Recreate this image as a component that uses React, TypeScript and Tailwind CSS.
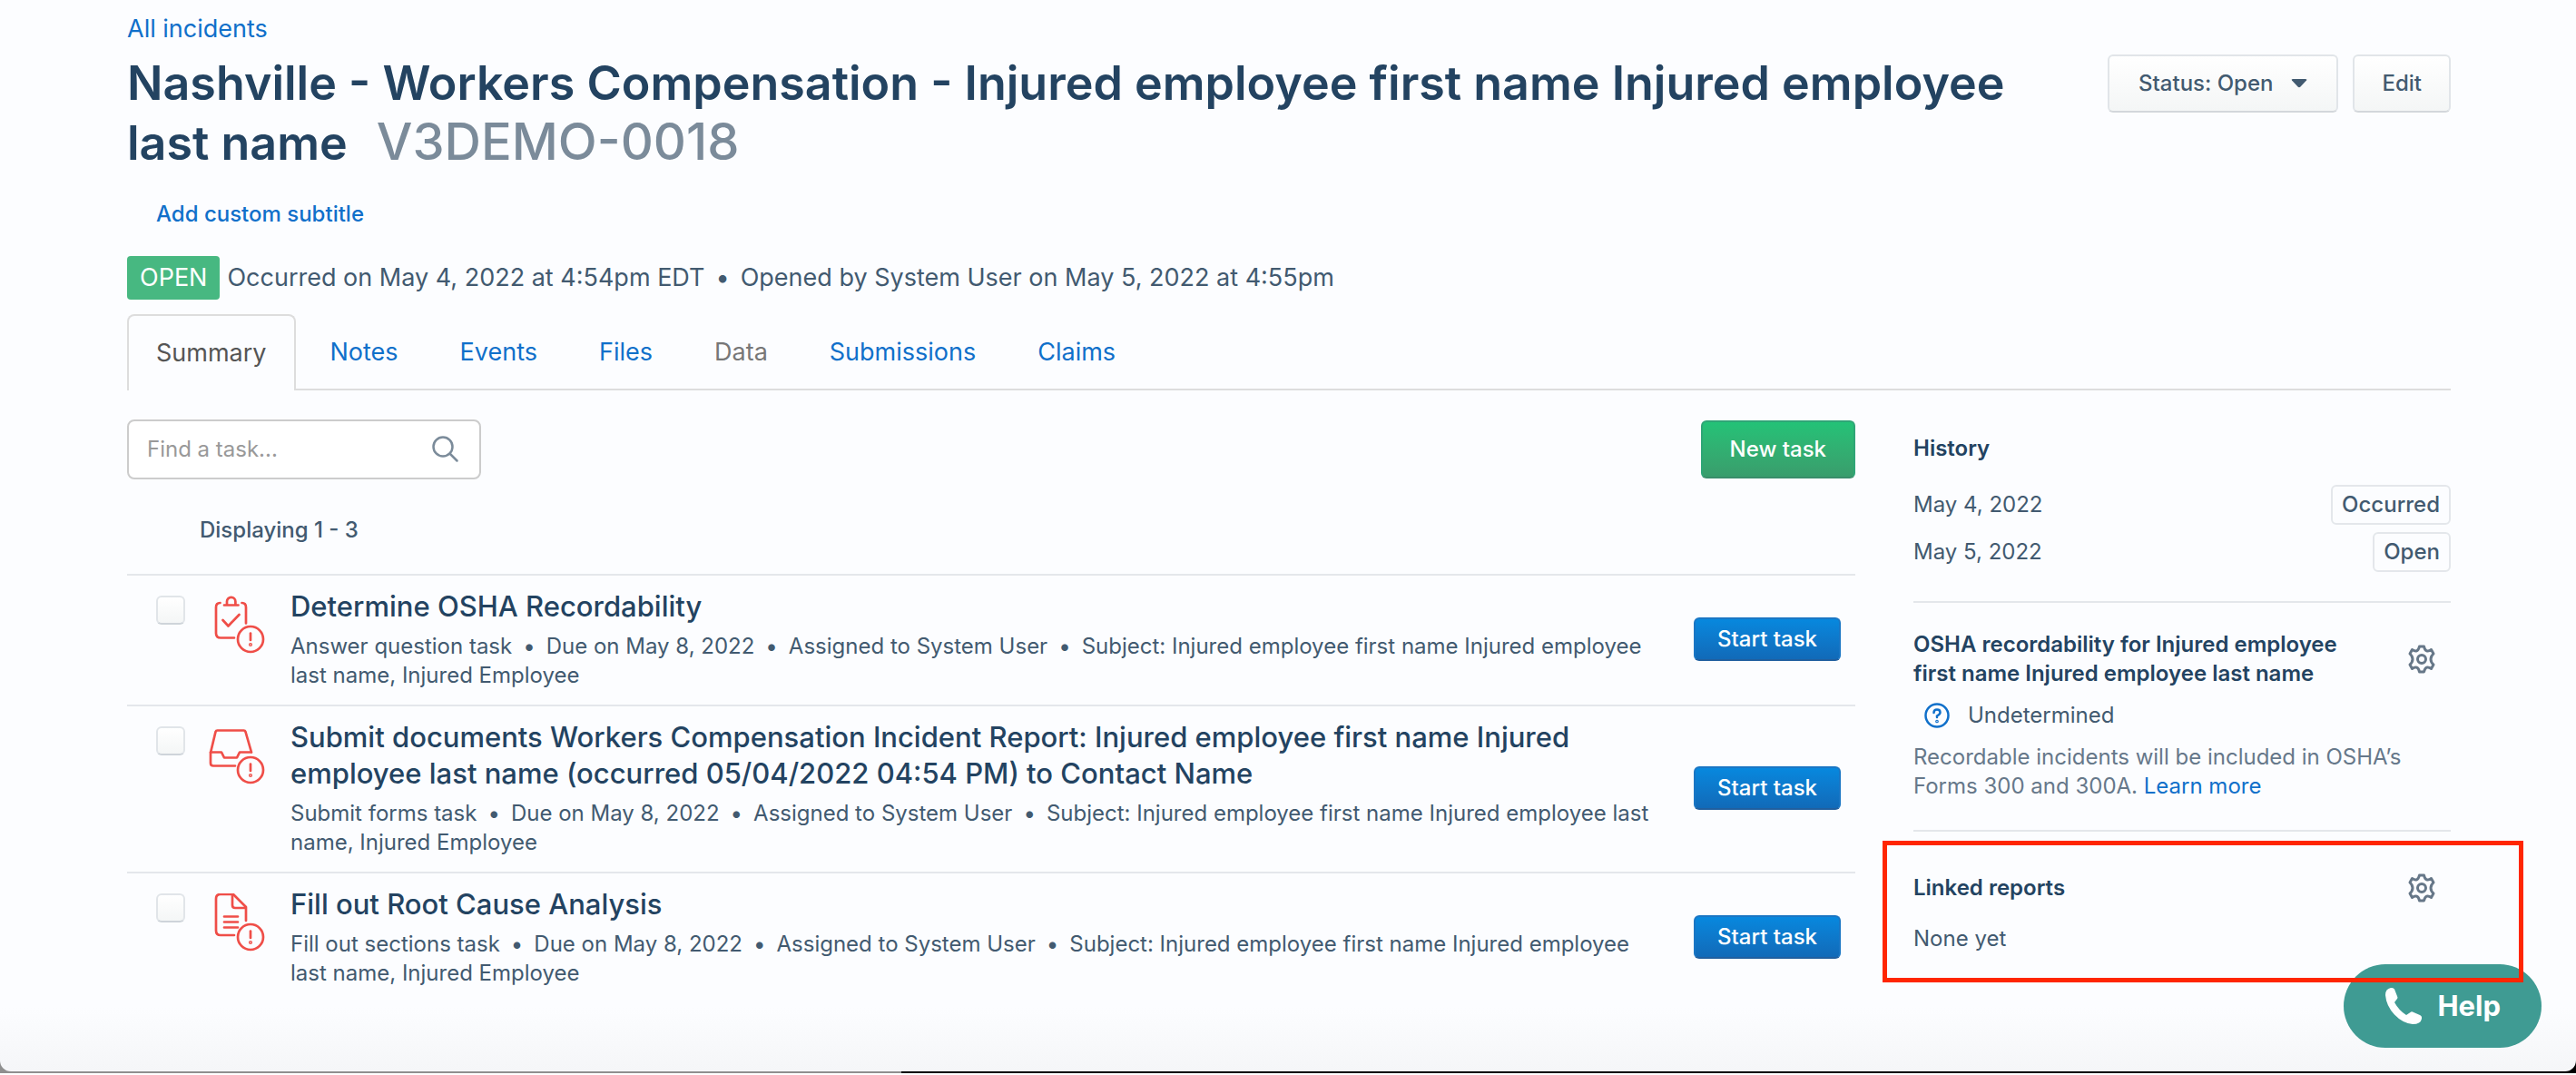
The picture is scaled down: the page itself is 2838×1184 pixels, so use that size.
import React from "react";

const Dot = () => <span className="px-3">•</span>;

function Gear({ label }: { label: string }) {
  return (
    <button aria-label={label} className="mr-4 shrink-0 text-[#667788]">
      <svg width="32" height="32" viewBox="0 0 32 32" fill="none" stroke="currentColor" strokeWidth="3" strokeLinejoin="round">
        <path d="M13.500 2h5q.8 4 3 4.800t5-1.300l2.500 4.500q-3 2.700-3 6t3 6L26.500 26.500q-3-2-5-1.300t-3 4.800h-5q-.8-4-3-4.800t-5 1.300L3 22q3-2.700 3-6t-3-6l2.500-4.500q3 2 5 1.300t3-4.800z" />
        <circle cx="16" cy="16" r="4.500" />
      </svg>
    </button>
  );
}

function Alert() {
  return (
    <>
      <circle cx="46" cy="48" r="14" />
      <path d="M46 41.500v7.500" />
      <circle cx="46" cy="54" r="0.700" />
    </>
  );
}

function TaskIcon({ kind }: { kind: string }) {
  return (
    <svg width="64" height="64" viewBox="0 0 64 64" fill="none" stroke="#ef4e48" strokeWidth="2.700" strokeLinecap="round" strokeLinejoin="round" aria-hidden="true">
      {kind === "check" && (
        <>
          <path d="M12.500 8q-4.500 0-4.500 5v28.500q0 5 5 5h15M36.500 8q4.500 0 4.500 5v17.500" />
          <path d="M17 10.500h15.500M20 10v-3.500a4.700 4.700 0 0 1 9.400 0V10" />
          <path d="M15.500 27l6 6.500 12-12.500" />
        </>
      )}
      {kind === "tray" && (
        <>
          <path d="M29 43.500H5q-3 0-3-3V29l5.500-23q.5-1.500 2-1.500h29q1.500 0 2 1.500l6.500 22.500" />
          <path d="M2 28.500h12l3 6h14l3-6h12.500" />
        </>
      )}
      {kind === "doc" && (
        <>
          <path d="M28 46H13q-5 0-5-5V6q0-5 5-5h14l14 14v15" />
          <path d="M26 1.500V13q0 3 3 3h11.500M17 25.500h15M17 31.500h15M17 37.500h15" />
        </>
      )}
      <Alert />
    </svg>
  );
}

const tasks = [
  { kind: "check", title: "Determine OSHA Recordability", type: "Answer question task" },
  {
    kind: "tray",
    title:
      "Submit documents Workers Compensation Incident Report: Injured employee first name Injured employee last name (occurred 05/04/2022 04:54 PM) to Contact Name",
    type: "Submit forms task",
  },
  { kind: "doc", title: "Fill out Root Cause Analysis", type: "Fill out sections task" },
];

const tabs = ["Notes", "Events", "Files", "Data", "Submissions", "Claims"];

const greyButton =
  "h-16 rounded-md border-2 border-[#e1e5e9] border-b-[#d3d7db] bg-linear-to-b from-white to-[#f4f6f6] text-[24px] font-medium text-[#425a70]";

export default function App() {
  return (
    <div className="bg-linear-to-r from-[#8f8f8f] from-35% to-black to-35% pb-[2px] font-['Inter',sans-serif] text-[24px] leading-8 text-[#425a70]">
      <div className="rounded-b-xl bg-[#fcfdff] bg-linear-to-b from-transparent from-94% to-[#f5f6f8] pt-3 pr-[138px] pl-[140px]">
        <header>
          <a href="#incidents" className="block text-[27px] leading-10 text-[#1070ca]">
            All incidents
          </a>
          <div className="mt-2 flex items-start justify-between">
            <h1 className="max-w-[2120px] text-[52px] leading-16 font-semibold text-[#234361]">
              Nashville - Workers Compensation - Injured employee first name Injured employee last name
              <span className="pl-8 text-[56px] font-medium text-[#7b8b9a]">V3DEMO-0018</span>
            </h1>
            <div className="flex shrink-0 gap-4">
              <button className={greyButton + " flex items-center gap-5 px-8"}>
                Status: Open
                <svg width="18" height="12" viewBox="0 0 18 12" fill="#425a70" aria-hidden="true">
                  <path d="M2 1h14q2 0 1 1.500l-6.500 7q-1.500 1.500-3 0L1 2.500Q0 1 2 1z" />
                </svg>
              </button>
              <button className={greyButton + " px-[30px]"}>Edit</button>
            </div>
          </div>
          <button className="mt-[30px] ml-8 block font-medium text-[#1070ca]">Add custom subtitle</button>
          <div className="mt-[30px] flex items-center text-[27px]">
            <span className="mr-2 flex h-12 items-center rounded-sm bg-[#47b881] px-[14px] text-white">OPEN</span>
            Occurred on May 4, 2022 at 4:54pm EDT
            <Dot />
            Opened by System User on May 5, 2022 at 4:55pm
          </div>
        </header>

        <nav className="mt-4 flex h-[84px] items-stretch border-b-2 border-[#dddddd] text-[27px] text-[#1070ca]">
          <a href="#summary" className="mr-1 -mb-[2px] flex items-center rounded-t-lg border-2 border-b-0 border-[#dddddd] bg-[#fcfdff] px-[30px] text-[#555]">
            Summary
          </a>
          {tabs.map((tab) => (
            <a key={tab} href={"#" + tab.toLowerCase()} className={"flex items-center px-[34px] pt-[2px] " + (tab === "Data" ? "text-[#777]" : "")}>
              {tab}
            </a>
          ))}
        </nav>

        <div className="flex gap-16">
          <main className="min-w-0 flex-1 pt-8">
            <div className="flex items-center justify-between">
              <label className="flex h-[66px] w-[390px] items-center rounded-lg border-2 border-[#cccccc] bg-white px-5">
                <input type="text" aria-label="Find a task" placeholder="Find a task..." className="min-w-0 flex-1 outline-none placeholder:text-[#999]" />
                <svg width="32" height="32" viewBox="0 0 32 32" fill="none" stroke="#7b8b9a" strokeWidth="2.500" strokeLinecap="round" aria-hidden="true">
                  <circle cx="12" cy="13" r="10.500" />
                  <path d="M20 21l7.500 7.500" />
                </svg>
              </label>
              <button className="h-16 rounded-md border-2 border-[#2fa576] border-b-[#3a8e6a] bg-linear-to-b from-[#23c277] to-[#399d6c] px-[30px] font-medium text-white">
                New task
              </button>
            </div>
            <p className="mt-10 mb-8 pl-20 font-medium">Displaying 1 - 3</p>
            {tasks.map((t) => (
              <article key={t.kind} className="flex border-t-2 border-[#e4e7eb] pt-[14px] pb-4">
                <input
                  type="checkbox"
                  aria-label={t.title}
                  className="mt-2 ml-8 size-8 shrink-0 appearance-none rounded-md border-2 border-[#e1e5e9] border-b-[#ced4da] bg-linear-to-b from-white to-[#f4f6f6]"
                />
                <div className="mx-[26px] mt-2 shrink-0">
                  <TaskIcon kind={t.kind} />
                </div>
                <div className="min-w-0 flex-1">
                  <h2 className="text-[31px] leading-10 font-medium text-[#234361]">{t.title}</h2>
                  <p className="mt-2">
                    {t.type}
                    <Dot />
                    Due on May 8, 2022
                    <Dot />
                    Assigned to System User
                    <Dot />
                    Subject: Injured employee first name Injured employee last name, Injured Employee
                  </p>
                </div>
                <button className="mr-4 ml-11 h-12 shrink-0 self-center rounded-md border-2 border-[#1a76c4] border-b-[#205f9f] bg-linear-to-b from-[#0788de] to-[#116ab8] px-6 font-medium text-white">
                  Start task
                </button>
              </article>
            ))}
          </main>

          <aside className="w-[592px] shrink-0">
            <section className="border-b-2 border-[#e4e7eb] pt-12 pb-8">
              <h3 className="mb-6 font-semibold text-[#234361]">History</h3>
              <div className="flex items-center justify-between">
                May 4, 2022
                <span className="flex h-11 items-center rounded-md border-2 border-[#e4e7eb] px-[10px] font-medium">Occurred</span>
              </div>
              <div className="mt-2 flex items-center justify-between">
                May 5, 2022
                <span className="flex h-11 items-center rounded-md border-2 border-[#e4e7eb] px-[10px] font-medium">Open</span>
              </div>
            </section>
            <section className="border-b-2 border-[#e4e7eb] pt-[30px] pb-8">
              <div className="flex items-center justify-between">
                <h3 className="w-[500px] font-semibold text-[#234361]">OSHA recordability for Injured employee first name Injured employee last name</h3>
                <Gear label="Recordability settings" />
              </div>
              <div className="mt-[14px] flex items-center pl-3">
                <svg width="28" height="28" viewBox="0 0 28 28" fill="none" stroke="#1070ca" strokeWidth="2.500" strokeLinecap="round" aria-hidden="true">
                  <circle cx="14" cy="14" r="12.500" />
                  <path d="M10.500 11q0-3.500 3.500-3.500t3.500 3.200q0 2-3.500 3.800v1.500" />
                  <circle cx="14" cy="20.500" r="0.600" />
                </svg>
                <span className="ml-5">Undetermined</span>
              </div>
              <p className="mt-[14px] pr-8 text-[#66788a]">
                Recordable incidents will be included in OSHA’s Forms 300 and 300A.{" "}
                <a href="#learn" className="text-[#1070ca]">
                  Learn more
                </a>
              </p>
            </section>
            <section className="relative pt-[46px] pb-[130px]">
              <div className="pointer-events-none absolute top-[10px] -right-20 -left-[34px] z-20 h-[156px] border-5 border-[#ff2600]" />
              <div className="flex items-center justify-between">
                <h3 className="font-semibold text-[#234361]">Linked reports</h3>
                <Gear label="Linked report settings" />
              </div>
              <p className="mt-6">None yet</p>
            </section>
          </aside>
        </div>
      </div>
      <button className="fixed right-[38px] bottom-[30px] z-10 flex h-[92px] items-center gap-4 rounded-full bg-[#3f9b93] px-[45px] text-[31px] font-bold text-white">
        <svg width="42" height="42" viewBox="0 0 42 42" fill="white" aria-hidden="true">
          <path d="M7 1Q1 2 1 9q1 12 10 21.500T31 41q9 0 10-6 .5-3-2-4l-8-3.500q-1.500-.5-2.500.5L24 31Q16 26 11 17l3-4q.8-1 .3-2L11 2.500Q10 .5 7 1z" />
        </svg>
        Help
      </button>
    </div>
  );
}
